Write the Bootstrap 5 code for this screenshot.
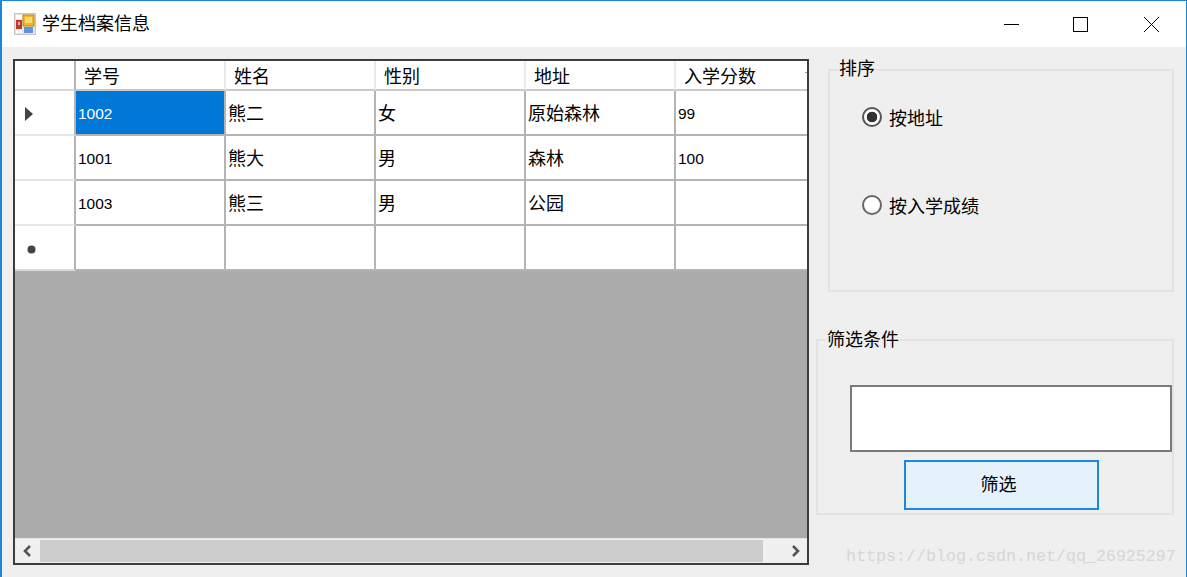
<!DOCTYPE html>
<html lang="zh">
<head>
<meta charset="utf-8">
<title>学生档案信息</title>
<link href="https://cdn.jsdelivr.net/npm/bootstrap@5.3.0/dist/css/bootstrap.min.css" rel="stylesheet">
<style>
html,body{height:100%;margin:0;background:#f0f0f0;overflow:hidden}
body{font-family:"Liberation Sans","Noto Sans CJK SC",sans-serif;color:#000;font-size:18px;line-height:1}
.win{width:1187px;height:577px;border-left:2px solid #1a86dc;border-top:1px solid #1a86dc;border-right:1px solid #1a86dc;position:relative;background:#efefef}
.tbar{height:46px;background:#fff;padding-left:12px;padding-right:0}
.tbar .ttl{margin-left:6px;font-size:18px}
.wbtns{margin-right:-1px}
.wbtns svg{display:block}
.wbtn{width:71px;height:46px}
.wbtn.wmin{width:67px}
.pane{padding:12px 13px 0 11px}
.gridbox{width:796px;height:506px;border:2px solid #3c3c3c;background:#ababab;overflow:hidden;flex:none}
.dg{border-collapse:separate;border-spacing:0;table-layout:fixed;width:792px;background:#fff}
.dg th,.dg td{padding:0;font-weight:400;border-right:2px solid #b4b4b4;border-bottom:2px solid #b4b4b4;height:45px;white-space:nowrap;overflow:hidden}
.dg th{height:30px;border-right-color:#eaeaea;border-bottom-color:#c8c8c8;padding:5px 0 1px 8px}
.dg td{padding:2px 0 0 2px}
.dg .rh{width:61px;padding:0;border-right-color:#b4b4b4;border-bottom-color:#e6e6e6}
.dg th.rh{border-right-color:#b4b4b4;border-bottom-color:#c8c8c8}
.dg tr:last-child .rh{border-bottom-color:#d8d8d8}
.dg .cw{width:150px}
.dg .lastc{border-right:0}
.dg th.lastc{position:relative}
.dg th.lastc::after{content:"";position:absolute;right:0;top:11px;width:2px;height:1px;background:#999}
.dg .num{font-size:15.5px;padding-left:2px}
.dg .sel{background:#0078d7;color:#fff}
.rowmark{display:flex;align-items:center;padding:4px 0 0 10px}
.rowarrow{margin-top:-2px}
.stardot{margin-left:2px}
.scrollb{height:25px;background:#f0f0f0;border-top:1px solid #e4e4e4}
.scrollb .arw{width:25px;height:24px;flex:none;padding-right:2px}
.scrollb .thumb{width:723px;height:22px;background:#cdcdcd;margin-top:1px;flex:none}
.scrollb .arwr{padding-right:6px}
.spc{height:267px}
.side{width:358px;margin-left:7px;flex:none}
.grp{border:2px solid #e3e3e3;position:relative}
.grp1{margin-left:12px;margin-top:10px;width:346px;height:223px;padding:34px 0 0 32px}
.grp2{margin-top:47px;width:358px;height:176px;padding:44px 0 0 32px}
.grptitle{position:absolute;top:-12px;background:#efefef;font-size:18px;line-height:22px;padding:0 1px}
.grp1 .grptitle{left:8px;top:-13px}
.grp2 .grptitle{left:8px}
.opt{height:24px;gap:7px;margin:0;padding:0;font-size:18px}
.opt + .opt{margin-top:64px}
.optlbl{padding-top:3px}
.opt .form-check-input{width:20px;height:20px;margin:0;float:none;flex:none;border:2px solid #666;background:#fff;box-shadow:none;border-radius:50%}
.opt .form-check-input:checked{background:radial-gradient(circle,#333 0 5px,#fff 5.6px);border-color:#555}
.fbox{width:322px;height:67px;border:2px solid #7a7a7a;border-radius:0;background:#fff;box-shadow:none;padding:0;display:block}
.fbtn{display:block;width:195px;height:50px;margin:8px 0 0 54px;border:2px solid #1c86e0;border-radius:0;background:#e5f1fb;color:#000;font-size:18px;padding:0 6px 0 0;line-height:1}
.wm{position:absolute;left:844px;top:546px;font-family:"Liberation Mono",monospace;font-size:16.67px;color:#d6d6d6;line-height:20px;white-space:nowrap}
</style>
</head>
<body>
<div class="win">
  <div class="tbar d-flex align-items-center justify-content-between">
    <div class="d-flex align-items-center">
      <svg width="22" height="22" viewBox="0 0 22 22"><rect x="0.5" y="0.5" width="21" height="21" fill="#e6e6e6" stroke="#c4c4c4"/><rect x="2" y="2" width="6" height="4" fill="#fff"/><rect x="2" y="7" width="6" height="9" fill="#c0392b"/><rect x="4" y="9" width="2" height="3" fill="#f0b0a0"/><rect x="9" y="2" width="11" height="11" fill="#f2b824" stroke="#b98a12"/><rect x="11" y="4" width="7" height="6" fill="#fbdc6a"/><rect x="10" y="14" width="9" height="6" fill="#5f94e0"/><rect x="2" y="17" width="2.5" height="3" fill="#fff"/><rect x="5.5" y="17" width="2.5" height="3" fill="#fff"/></svg>
      <span class="ttl">学生档案信息</span>
    </div>
    <div class="wbtns d-flex">
      <div class="wbtn wmin d-flex align-items-center justify-content-center"><svg width="15" height="15" viewBox="0 0 15 15"><path d="M0 7.5H15" stroke="#000" stroke-width="1"/></svg></div>
      <div class="wbtn d-flex align-items-center justify-content-center"><svg width="15" height="15" viewBox="0 0 15 15"><rect x=".5" y=".5" width="14" height="14" fill="none" stroke="#000"/></svg></div>
      <div class="wbtn d-flex align-items-center justify-content-center"><svg width="15" height="15" viewBox="0 0 15 15"><path d="M0 0L15 15M15 0L0 15" stroke="#000" stroke-width="1"/></svg></div>
    </div>
  </div>
  <div class="pane d-flex align-items-start">
    <div class="gridbox d-flex flex-column">
      <table class="dg">
        <thead>
          <tr><th class="rh"></th><th class="cw">学号</th><th class="cw">姓名</th><th class="cw">性别</th><th class="cw">地址</th><th class="lastc">入学分数</th></tr>
        </thead>
        <tbody>
          <tr><td class="rh"><div class="rowmark"><svg class="rowarrow" width="8" height="14" viewBox="0 0 8 14"><path d="M0 0L8 7L0 14Z" fill="#444"/></svg></div></td><td class="num sel">1002</td><td>熊二</td><td>女</td><td>原始森林</td><td class="num lastc">99</td></tr>
          <tr><td class="rh"></td><td class="num">1001</td><td>熊大</td><td>男</td><td>森林</td><td class="num lastc">100</td></tr>
          <tr><td class="rh"></td><td class="num">1003</td><td>熊三</td><td>男</td><td>公园</td><td class="lastc"></td></tr>
          <tr><td class="rh"><div class="rowmark"><svg width="9" height="9" viewBox="0 0 9 9" class="stardot"><circle cx="4.5" cy="4.5" r="4" fill="#444"/></svg></div></td><td></td><td></td><td></td><td></td><td class="lastc"></td></tr>
        </tbody>
      </table>
      <div class="spc"></div>
      <div class="scrollb d-flex">
        <div class="arw d-flex align-items-center justify-content-center"><svg width="10" height="12" viewBox="0 0 10 12"><path d="M8 1L3 6L8 11" fill="none" stroke="#555" stroke-width="2.6"/></svg></div>
        <div class="thumb"></div>
        <div class="arwr flex-grow-1 d-flex align-items-center justify-content-end"><svg width="10" height="12" viewBox="0 0 10 12"><path d="M2 1L7 6L2 11" fill="none" stroke="#555" stroke-width="2.6"/></svg></div>
      </div>
    </div>
    <div class="side">
      <div class="grp grp1">
        <div class="grptitle">排序</div>
        <label class="opt form-check d-flex align-items-center"><input class="form-check-input" type="radio" name="sortby" checked><span class="optlbl">按地址</span></label>
        <label class="opt form-check d-flex align-items-center"><input class="form-check-input" type="radio" name="sortby"><span class="optlbl">按入学成绩</span></label>
      </div>
      <div class="grp grp2">
        <div class="grptitle">筛选条件</div>
        <input class="fbox form-control" type="text">
        <button class="btn fbtn" type="button">筛选</button>
      </div>
    </div>
  </div>
  <div class="wm">https://blog.csdn.net/qq_26925297</div>
</div>
<script src="https://cdn.jsdelivr.net/npm/bootstrap@5.3.0/dist/js/bootstrap.bundle.min.js"></script>
</body>
</html>
